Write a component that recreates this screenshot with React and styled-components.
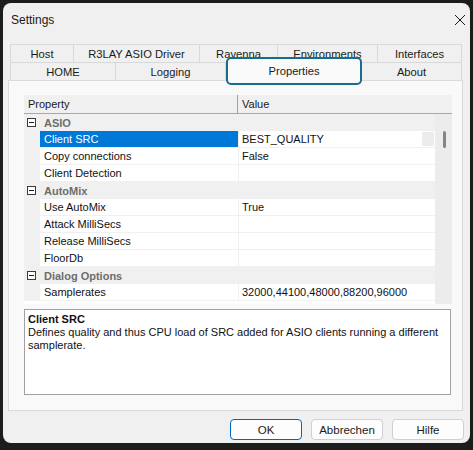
import React from "react";
import styled, { createGlobalStyle } from "styled-components";

const GlobalStyle = createGlobalStyle`
  html, body { margin: 0; padding: 0; background: #1c1c1c; }
  body { width: 473px; height: 450px; overflow: hidden; font-family: "Liberation Sans", Arial, sans-serif; }
  #root { padding: 3px 3px 0 3px; }
`;

const Window = styled.div`
  width: 467px;
  height: 440px;
  box-sizing: border-box;
  background: #f0f0f0;
  border-radius: 8px;
  padding: 0 7px 3px 5px;
  display: flex;
  flex-direction: column;
`;

const TitleBar = styled.div`
  height: 34px;
  display: flex;
  align-items: center;
  justify-content: space-between;
  padding: 0 0 0 3px;
  margin-right: -3px;
  font-size: 12px;
  color: #1a1a1a;
`;

const CloseBtn = styled.div`
  width: 12px;
  height: 12px;
  display: flex;
`;

const Tabs = styled.div`
  margin: 7px 1px 0 2px;
  display: flex;
  flex-direction: column;
`;

const TabRow = styled.div`
  display: flex;
  height: 18px;
`;

const Tab = styled.div`
  box-sizing: border-box;
  flex: 0 0 ${(p) => p.$w}px;
  height: 18px;
  border: 1px solid #d9d9d9;
  border-bottom: none;
  border-left: ${(p) => (p.$first ? "1px solid #d9d9d9" : "none")};
  background: #f0f0f0;
  font-size: 11.2px;
  color: #1a1a1a;
  display: flex;
  align-items: center;
  justify-content: center;
  padding-top: 1px;
`;

const ActiveTab = styled.div`
  box-sizing: border-box;
  flex: 0 0 ${(p) => p.$w}px;
  height: 28px;
  margin-top: -5px;
  position: relative;
  z-index: 2;
  border: 2px solid #176d8a;
  border-radius: 5px;
  background: #f9f9f9;
  font-size: 11.2px;
  color: #1a1a1a;
  display: flex;
  justify-content: center;
  padding-top: 6px;
`;

const Page = styled.div`
  box-sizing: border-box;
  border: 1px solid #dadada;
  background: #f9f9f9;
  padding: 14px 10px 15px 15px;
  display: flex;
  flex-direction: column;
  gap: 5px;
`;

const Grid = styled.div`
  width: 428px;
  height: 209px;
  display: flex;
  flex-direction: column;
  background: #ffffff;
`;

const Header = styled.div`
  height: 19px;
  box-sizing: border-box;
  display: flex;
  background: #f0f0f0;
  border-bottom: 1px solid #a8a8a8;
  font-size: 11px;
  color: #1a1a1a;
`;

const HeaderCell = styled.div`
  box-sizing: border-box;
  width: ${(p) => (p.$w ? `${p.$w}px` : "auto")};
  flex: ${(p) => (p.$w ? "none" : "1")};
  padding-left: 4px;
  display: flex;
  align-items: center;
  border-right: ${(p) => (p.$divider ? "1px solid #a0a0a0" : "none")};
`;

const Body = styled.div`
  display: flex;
  flex: 1;
  min-height: 0;
`;

const Rows = styled.div`
  width: 411px;
  display: flex;
  flex-direction: column;
  background: #ffffff;
`;

const CatRow = styled.div`
  height: 17px;
  flex: none;
  display: flex;
  align-items: center;
  background: #f0f0f0;
  padding-left: 3px;
  gap: 8px;
  font-size: 11px;
  font-weight: bold;
  color: #6d6d6d;
`;

const MinusBox = styled.div`
  width: 9px;
  height: 9px;
  box-sizing: border-box;
  border: 1px solid #3a3a3a;
  background: #ffffff;
  display: flex;
  align-items: center;
  justify-content: center;
  &::after {
    content: "";
    width: 5px;
    height: 1px;
    background: #1a1a1a;
  }
`;

const PropRow = styled.div`
  height: 17px;
  flex: none;
  display: flex;
  background: #f0f0f0;
  font-size: 11px;
  color: #111;
`;

const Margin = styled.div`
  width: 16px;
  flex: none;
`;

const NameCell = styled.div`
  box-sizing: border-box;
  width: 198px;
  height: 16px;
  flex: none;
  padding-left: 4px;
  display: flex;
  align-items: center;
  background: ${(p) => (p.$sel ? "#0078d7" : "#ffffff")};
  color: ${(p) => (p.$sel ? "#ffffff" : "#111")};
`;

const ValueCell = styled.div`
  box-sizing: border-box;
  flex: 1;
  height: 16px;
  margin-left: 1px;
  padding-left: 3px;
  display: flex;
  align-items: center;
  justify-content: space-between;
  background: #ffffff;
`;

const DropStub = styled.div`
  width: 12px;
  height: 14px;
  background: #ececec;
  margin-right: 1px;
`;

const ScrollTrack = styled.div`
  width: 17px;
  background: #ececec;
  display: flex;
  flex-direction: column;
  align-items: center;
  padding-top: 17px;
  box-sizing: border-box;
`;

const Thumb = styled.div`
  width: 3px;
  height: 17px;
  border-radius: 2px;
  background: #858585;
  margin-left: 1px;
`;

const Desc = styled.div`
  width: 427px;
  height: 86px;
  box-sizing: border-box;
  border: 1px solid #a0a0a0;
  background: #ffffff;
  padding: 3px 3px;
  font-size: 11px;
  line-height: 13px;
  color: #111;
`;

const DescTitle = styled.div`
  font-weight: bold;
`;

const Buttons = styled.div`
  display: flex;
  justify-content: flex-end;
  gap: 9px;
  margin-top: 8px;
  margin-right: -1px;
`;

const Button = styled.div`
  box-sizing: border-box;
  width: 72px;
  height: 21px;
  border-radius: 4px;
  background: #fdfdfd;
  border: ${(p) => (p.$primary ? "1.5px solid #0067c0" : "1px solid #d0d0d0")};
  font-size: 11.5px;
  color: #1a1a1a;
  display: flex;
  align-items: center;
  justify-content: center;
`;

const row1 = [
  { label: "Host", w: 64 },
  { label: "R3LAY ASIO Driver", w: 126 },
  { label: "Ravenna", w: 78 },
  { label: "Environments", w: 100 },
  { label: "Interfaces", w: 84 },
];
const row2 = [
  { label: "HOME", w: 106 },
  { label: "Logging", w: 110 },
  { label: "Properties", w: 136, active: true },
  { label: "About", w: 100 },
];

const rows = [
  { cat: "ASIO" },
  { name: "Client SRC", value: "BEST_QUALITY", sel: true },
  { name: "Copy connections", value: "False" },
  { name: "Client Detection", value: "" },
  { cat: "AutoMix" },
  { name: "Use AutoMix", value: "True" },
  { name: "Attack MilliSecs", value: "" },
  { name: "Release MilliSecs", value: "" },
  { name: "FloorDb", value: "" },
  { cat: "Dialog Options" },
  { name: "Samplerates", value: "32000,44100,48000,88200,96000" },
];

export default function App() {
  return (
    <>
      <GlobalStyle />
      <Window>
        <TitleBar>
          <span>Settings</span>
          <CloseBtn>
            <svg width="12" height="12" viewBox="0 0 12 12">
              <path d="M1 1 L11 11 M11 1 L1 11" stroke="#1a1a1a" strokeWidth="1" fill="none" />
            </svg>
          </CloseBtn>
        </TitleBar>
        <Tabs>
          <TabRow>
            {row1.map((t, i) => (
              <Tab key={t.label} $w={t.w} $first={i === 0}>
                {t.label}
              </Tab>
            ))}
          </TabRow>
          <TabRow>
            {row2.map((t, i) =>
              t.active ? (
                <ActiveTab key={t.label} $w={t.w}>
                  {t.label}
                </ActiveTab>
              ) : (
                <Tab key={t.label} $w={t.w} $first={i === 0}>
                  {t.label}
                </Tab>
              )
            )}
          </TabRow>
        </Tabs>
        <Page>
          <Grid>
            <Header>
              <HeaderCell $w={214} $divider>
                Property
              </HeaderCell>
              <HeaderCell>Value</HeaderCell>
            </Header>
            <Body>
              <Rows>
                {rows.map((r, i) =>
                  r.cat ? (
                    <CatRow key={i}>
                      <MinusBox />
                      {r.cat}
                    </CatRow>
                  ) : (
                    <PropRow key={i}>
                      <Margin />
                      <NameCell $sel={r.sel}>{r.name}</NameCell>
                      <ValueCell>
                        <span>{r.value}</span>
                        {r.sel && <DropStub />}
                      </ValueCell>
                    </PropRow>
                  )
                )}
              </Rows>
              <ScrollTrack>
                <Thumb />
              </ScrollTrack>
            </Body>
          </Grid>
          <Desc>
            <DescTitle>Client SRC</DescTitle>
            Defines quality and thus CPU load of SRC added for ASIO clients running a different samplerate.
          </Desc>
        </Page>
        <Buttons>
          <Button $primary>OK</Button>
          <Button>Abbrechen</Button>
          <Button>Hilfe</Button>
        </Buttons>
      </Window>
    </>
  );
}
